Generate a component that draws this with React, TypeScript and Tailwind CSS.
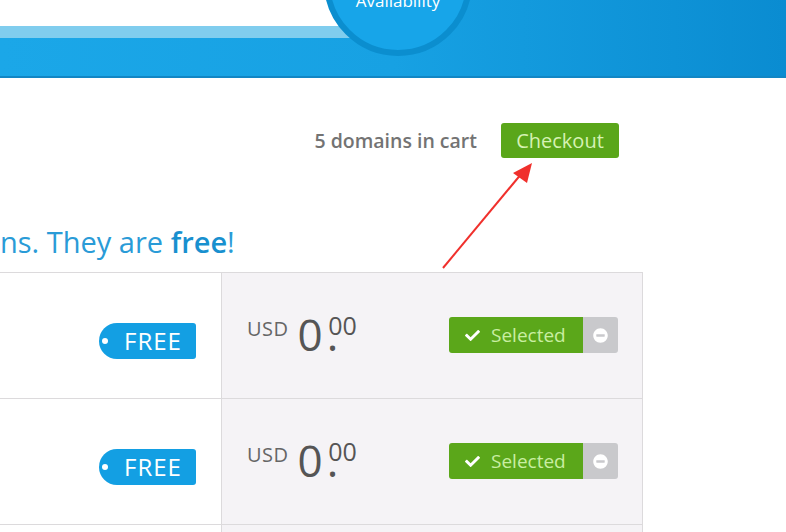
import React from 'react';
import { FaCheck, FaMinusCircle } from 'react-icons/fa';

const font = { fontFamily: '"Open Sans", "Liberation Sans", sans-serif' };

const rows = [1, 2];

const Price: React.FC = () => (
  <div className="flex items-start text-[#555]">
    <span className="mt-[2px] text-[20px] leading-[19px] tracking-[0.5px] text-[#666]">USD</span>
    <span className="ml-[9px] -mt-[5px] text-[44px] leading-[44px]">0</span>
    <span className="ml-[4px] -mt-[5px] text-[44px] leading-[44px]">.</span>
    <span className="-ml-[10px] -mt-[3px] text-[25px] leading-[23px]">00</span>
  </div>
);

const SelectedButton: React.FC = () => (
  <div className="flex h-[36px]">
    <div className="flex w-[134px] items-center gap-[11px] rounded-l-[3px] bg-[#5ba71a] pl-[16px]">
      <FaCheck className="h-[15px] w-[15px] text-white" />
      <span className="text-[19px] leading-none text-[#c9eea2]">Selected</span>
    </div>
    <div className="flex w-[35px] items-center justify-center rounded-r-[3px] bg-[#c9c9cc]">
      <FaMinusCircle className="h-[15px] w-[15px] text-white" />
    </div>
  </div>
);

const Row: React.FC = () => (
  <div className="flex h-[126px] border-b border-[#dcdadc]">
    <div className="flex w-[222px] justify-end border-r border-[#dcdadc] bg-white pr-[25px] pt-[50px]">
      <div className="flex h-[36px] w-[97px] items-center rounded-l-[18px] rounded-r-[3px] bg-[#139fe3] pl-[3px]">
        <span className="h-[6px] w-[6px] rounded-full bg-white" />
        <span className="ml-[16px] text-[24px] font-medium leading-none tracking-[1px] text-white">FREE</span>
      </div>
    </div>
    <div className="flex flex-1 items-start justify-between bg-[#f5f3f6] pl-[25px] pr-[24px] pt-[44px]">
      <Price />
      <SelectedButton />
    </div>
  </div>
);

export default function App() {
  return (
    <div className="relative h-[532px] w-[786px] overflow-hidden bg-white" style={font}>
      {/* header band */}
      <div className="relative h-[78px] overflow-hidden border-b-2 border-[#1286c4] bg-gradient-to-r from-[#1ba7e8] via-[#17a1e3] to-[#0a8cd1]">
        <div className="h-[26px] w-[360px] bg-white" />
        <div className="h-[12px] w-[360px] bg-[#80cdee]" />
        <div className="absolute left-[324px] top-[-92px] flex h-[148px] w-[148px] justify-center rounded-full border-[6px] border-[#0b8ecf] bg-[#17a5e9]">
          <span className="absolute top-[77px] text-[17px] leading-[20px] text-white">Availability</span>
        </div>
      </div>

      <div className="w-[643px]">
        <div className="flex items-center justify-end gap-[24px] pr-[24px] pt-[45px]">
          <span className="text-[19.5px] font-semibold text-[#737373]">5 domains in cart</span>
          <button className="h-[35px] w-[118px] rounded-[3px] bg-[#5aa61a] text-[20px] leading-none text-[#d6f2b4]">
            Checkout
          </button>
        </div>

        <h2 className="mt-[65px] whitespace-nowrap text-[29px] leading-[38px] text-[#2a9bd7]">
          ns. They are <b className="font-semibold text-[#1890cf]">free</b>!
        </h2>

        <div className="mt-[11px] border-r border-t border-[#dcdadc]">
          {rows.map((r) => (
            <Row key={r} />
          ))}
          <div className="flex h-[40px]">
            <div className="w-[222px] border-r border-[#dcdadc] bg-white" />
            <div className="flex-1 bg-[#f5f3f6]" />
          </div>
        </div>
      </div>

      {/* annotation arrow */}
      <svg className="pointer-events-none absolute left-0 top-0" width="786" height="532">
        <line x1="443" y1="268" x2="522" y2="173" stroke="#f0302c" strokeWidth="2" />
        <polygon points="532,163 513,173 527,183" fill="#f0302c" />
      </svg>
    </div>
  );
}
